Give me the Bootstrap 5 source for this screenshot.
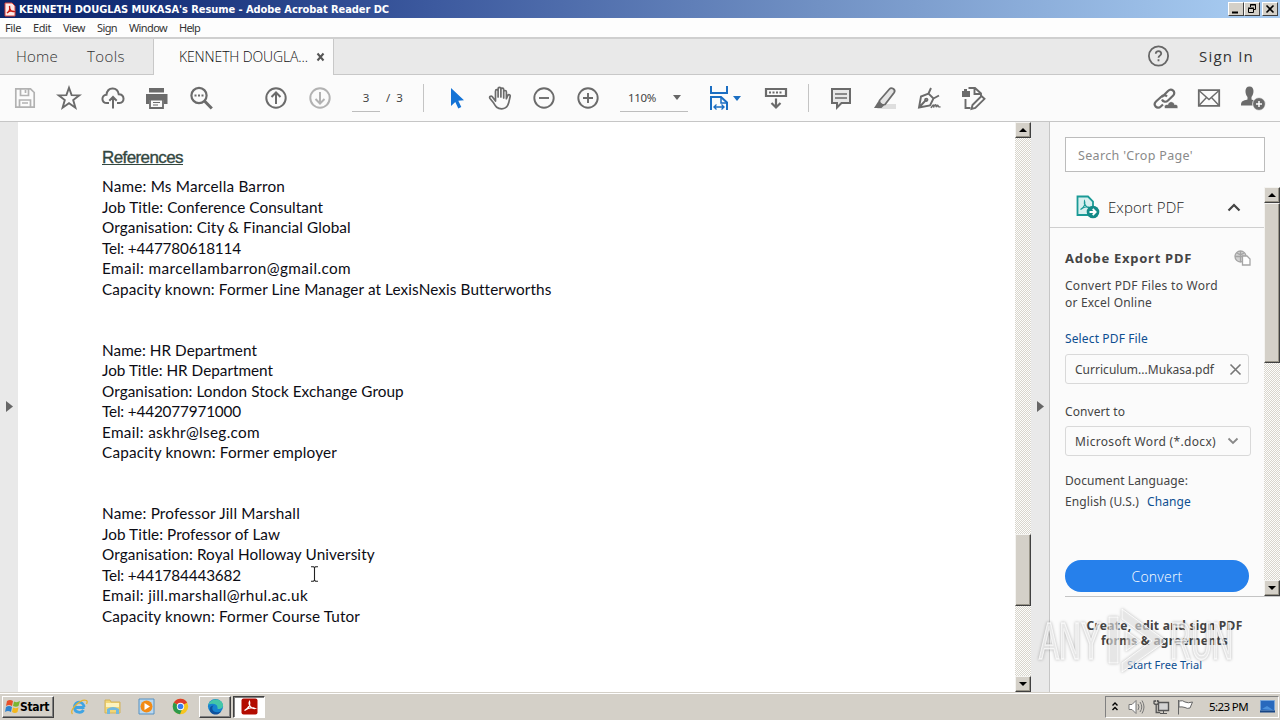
<!DOCTYPE html>
<html lang="en">
<head>
<meta charset="utf-8">
<title>KENNETH DOUGLAS MUKASA's Resume - Adobe Acrobat Reader DC</title>
<link href="https://cdn.jsdelivr.net/npm/bootstrap@5.3.0/dist/css/bootstrap.min.css" rel="stylesheet">
<style>
  body{width:1280px;height:720px;overflow:hidden;background:#fff;font-family:"Noto Sans","Open Sans",sans-serif;font-size:12px;line-height:1.2;color:#444}
  svg{display:block;flex:none}
  [data-w]{display:inline-block;white-space:nowrap}
  .titlebar{height:18px;background:linear-gradient(90deg,#0a246a 0,#16317a 12%,#3d5a9f 34%,#7191c4 64%,#a6caf0 97%);padding:0 2px 0 4px}
  .titlebar .caption{font:bold 11px/18px "DejaVu Sans Condensed","Noto Sans",sans-serif;color:#fff;margin-top:1px}
  .wbtn{width:16px;height:14px;background:#d4d0c8;border:1px solid;border-color:#fff #404040 #404040 #fff}
  .wbtn+.wbtn:last-child{margin-left:2px}
  .menubar{height:19px;font-size:11px;line-height:19px;background:#fdfdfd;color:#333;padding-left:5px;gap:12px}
  .tabstrip{height:38px;border-top:2px solid #cfcfcf;background:#e9e9e9;font-family:"Open Sans",sans-serif}
  .tab-off{border-bottom:1px solid #c8c8c8;color:#333;font-size:15px;font-weight:300;padding-bottom:1px}
  .tab-on{width:181px;background:#fbfbfb;border:solid #c8c8c8;border-width:0 1px;color:#111;font-size:14px;font-weight:300;padding:0 6px 0 25px}
  .toolbar{height:47px;background:#fbfbfb;border-bottom:1px solid #c6c6c6;color:#6b6b6b;font-size:11.5px;padding-left:3px;padding-right:5px}
  .cell{width:44px;display:flex;justify-content:center;flex:none}
  .vr-line{width:1px;height:28px;background:#c4c4c4;flex:none}
  .field{height:28px;border-bottom:1px solid #bdbdbd;color:#444}
  .gutter{background:#e9e9e9;flex:none;width:18px;padding:0 0 2px 6px}
  .paper{width:997px;background:#fff;padding:27px 0 0 84px;font-family:Lato,sans-serif;color:#0c0c14;font-size:15.3px}
  .paper h1{font:17px/17px "Liberation Sans",sans-serif;color:#33473f;margin:0 0 10.2px;-webkit-text-stroke:.35px #33473f}
  .paper .line{height:20.5px;line-height:20.5px}
  .paper .entry{margin-bottom:40.5px}
  .sb{width:16px;flex:none;background:repeating-conic-gradient(#fdfdfb 0 25%,#d8d5cd 0 50%) 0 0/2px 2px}
  .sb .b,.sb .thumb{background:#d4d0c8;border:1px solid;border-color:#f4f3f0 #404040 #404040 #f4f3f0;box-shadow:inset -1px -1px #989488}
  .sb .b{height:16px;display:flex;align-items:center;justify-content:center}
  .side{width:231px;border-left:1px solid #c6c6c6;background:#fbfbfb;flex:none}
  .search{margin:15px 15px 0;height:35px;border:1px solid #bcbcbc;background:#fff;color:#8a8a8a;padding:1px 12px 0;font-size:12.5px}
  .panel{height:409px;margin-top:15px;overflow:hidden}
  .exp-head{height:41px;border-bottom:1px solid #cfcfcf;padding:0 23px 0 26px;font-size:15px;font-weight:300;color:#222;font-family:"Open Sans",sans-serif}
  .exp-body{padding:22px 0 0 15px;width:201px}
  .exp-body>div{height:17px;line-height:17px}
  .exp-body>.box{height:30px;border:1px solid #d9d9d9;border-radius:3px;padding:0 6px 0 9px}
  .blue{color:#0d4f91}
  .exp-body>.convert{height:32px;width:184px;border-radius:16px;background:#2680eb;color:#fff;font-size:14px;font-weight:300;font-family:"Open Sans",sans-serif}
  .trial{margin-left:15px;border-top:1px solid #c4c4c4;padding:21px 16px 0 0;text-align:center;line-height:15px}
  .taskbar{height:28px;background:#d4d0c8;border-top:1px solid #d4d0c8;box-shadow:inset 0 1px #fff;padding:2px 0 2px 2px;color:#000}
  .tbtn{border:1px solid;border-color:#fff #404040 #404040 #fff;box-shadow:inset -1px -1px #808080;height:22px}
  .tbtn.on{background:#fff;border-color:#404040 #fff #fff #404040;box-shadow:inset 1px 1px #808080}
  .tray{width:174px;height:22px;border:1px solid;border-color:#808080 #fff #fff #808080;margin-right:1px;padding:0 3px 0 5px}
  .mark-over{position:absolute;left:1030px;top:600px;pointer-events:none;filter:drop-shadow(0 0 1.5px rgba(0,0,0,.38))}
  .ibeam{position:absolute;left:309px;top:566px}
</style>
</head>
<body class="d-flex flex-column position-relative">
<header class="titlebar d-flex align-items-center flex-shrink-0">
  <svg width="12" height="15" viewBox="0 0 12 15"><path d="M1 1h7l3 3v10H1z" fill="#fce9e7" stroke="#d9423a"/><path d="M3 11c3-2 3-5 2.500-7C5 8 8 10 10 9.500 7 8 5 9 3 11" fill="none" stroke="#c8190f" stroke-width="1.300"/></svg>
  <span class="caption" style="margin-left:3px" data-w="370">KENNETH DOUGLAS MUKASA's Resume - Adobe Acrobat Reader DC</span>
  <div class="d-flex ms-auto">
    <div class="wbtn"><svg width="14" height="12"><path d="M3 9.500h6" stroke="#000" stroke-width="2"/></svg></div>
    <div class="wbtn"><svg width="14" height="12" fill="none" stroke="#000"><path d="M5.500 4V1.500h5v5H9M5 2h6M3.500 5.500h5v4h-5zM3 5h6"/></svg></div>
    <div class="wbtn"><svg width="14" height="12"><path d="M3.500 2.500l7 7m0-7l-7 7" stroke="#000" stroke-width="1.600"/></svg></div>
  </div>
</header>
<nav class="menubar d-flex flex-shrink-0">
  <span data-w="16">File</span><span data-w="18">Edit</span><span data-w="22">View</span><span data-w="20">Sign</span><span data-w="38">Window</span><span data-w="21">Help</span>
</nav>
<div class="tabstrip d-flex flex-shrink-0">
  <div class="tab-off d-flex align-items-center" style="width:153px;padding-left:16px"><span data-w="42">Home</span><span data-w="38" style="margin-left:29px">Tools</span></div>
  <div class="tab-on d-flex align-items-center"><span data-w="129">KENNETH DOUGLA...</span><svg class="ms-auto" width="13" height="10" viewBox="0 0 13 10"><path d="M3.500 1.500l6 7m0-7l-6 7" stroke="#555" stroke-width="2"/></svg></div>
  <div class="tab-off d-flex align-items-center flex-grow-1 justify-content-end" style="padding-right:26px">
    <svg width="22" height="22" viewBox="0 0 22 22" fill="none" stroke="#666" stroke-width="1.800"><circle cx="10.500" cy="11" r="9.600"/><path d="M7.800 8.700c0-3.400 5.400-3.200 5.400 0 0 1.900-2.700 2-2.700 4M10.500 14.300v2"/></svg>
    <span data-w="55" style="margin-left:29px;font-weight:400">Sign In</span>
  </div>
</div>
<div class="toolbar d-flex align-items-center flex-shrink-0">
  <div class="cell"><svg width="24" height="24" viewBox="0 0 24 24" fill="none" stroke="#b2b2b2" stroke-width="1.700"><path d="M2.800 2.800h14.700l3.700 3.700v14.700H2.800zM7.500 3v6.500h8V3M12.500 4v3M6.500 21v-7h11v7M9 17h6"/></svg></div>
  <div class="cell"><svg width="26" height="26" viewBox="0 0 26 26" fill="none" stroke="#6b6b6b" stroke-width="1.900"><path d="M13 2.800l2.600 7.300 7.700.2-6.100 4.700 2.200 7.700L13 18.200l-6.400 4.500L8.800 15l-6.100-4.700 7.700-.2z"/></svg></div>
  <div class="cell"><svg width="24" height="24" viewBox="0 0 24 24" fill="none" stroke="#6b6b6b" stroke-width="2"><path d="M8 17H6c-6 0-6-8-.5-8.300C6.500.500 16.500.500 17.700 8.200 24 8.300 24 17 18.500 17H16M12 22.500V11.500M8.300 14.700L12 11l3.700 3.700"/></svg></div>
  <div class="cell"><svg width="24" height="24" viewBox="1 0 24 24" fill="#6b6b6b"><path d="M5 2h15v4.500H5z"/><path d="M2 8h21.500v10H20v-4H5v4H2z"/><path d="M6 13.500h13V22H6z" fill="#fbfbfb" stroke="#6b6b6b" stroke-width="1.800"/><path d="M9 16.500h7M9 19h5" stroke="#6b6b6b" stroke-width="1.200"/></svg></div>
  <div class="cell"><svg width="24" height="24" viewBox="0 0 24 24" fill="none" stroke="#6b6b6b"><circle cx="10" cy="9.500" r="7.600" stroke-width="2.200"/><path d="M15.500 15l7.300 7.500" stroke-width="3"/><path d="M5.500 9.500h2m1.500 0h2m1.500 0h2" stroke-width="2"/></svg></div>
  <div class="cell" style="margin-left:31px"><svg width="24" height="24" viewBox="0 0 24 24" fill="none" stroke="#6b6b6b" stroke-width="2"><circle cx="12" cy="12" r="9.700"/><path d="M12 18V6.500M7.500 11L12 6.500l4.500 4.500"/></svg></div>
  <div class="cell"><svg width="24" height="24" viewBox="0 0 24 24" fill="none" stroke="#b2b2b2" stroke-width="2"><circle cx="12" cy="12" r="9.700"/><path d="M12 6v11.500M7.500 13l4.500 4.500 4.500-4.500"/></svg></div>
  <div class="field text-center" style="width:28px;margin-left:10px;line-height:28px">3</div>
  <div style="margin-left:6px;width:37px;color:#444"><span data-w="17">/&nbsp; 3</span></div>
  <div class="vr-line"></div>
  <div class="cell" style="margin-left:11px"><svg width="24" height="24" viewBox="0 0 24 24"><path d="M6 2v18l4.300-4 3 6.500 3-1.400-3-6.300 5.700-.5z" fill="#1473d6"/></svg></div>
  <div class="cell" style="margin-left:-1px"><svg width="24" height="24" viewBox="0 0 24 24" fill="none" stroke="#6b6b6b" stroke-width="1.700" stroke-linejoin="round" stroke-linecap="round"><path d="M7.500 15V5.200c0-2 2.600-2 2.600 0V11 2.800c0-2 2.800-2 2.800 0V11 3.600c0-2 2.800-2 2.800 0V12 6c0-2 2.700-2 2.700 0v6.700L19.800 9.500c.8-1.600 2.800-.8 2.300 1C21 16 20.500 22.800 13.700 22.800c-5 0-6.200-2.600-8.200-6L2 12.500c-1.200-1.600.8-3 2.300-1.800z"/></svg></div>
  <div class="cell"><svg width="24" height="24" viewBox="0 0 24 24" fill="none" stroke="#6b6b6b" stroke-width="1.900"><circle cx="12" cy="12" r="9.700"/><path d="M7 12h10"/></svg></div>
  <div class="cell"><svg width="24" height="24" viewBox="0 0 24 24" fill="none" stroke="#6b6b6b" stroke-width="1.900"><circle cx="12" cy="12" r="9.700"/><path d="M7 12h10M12 7v10"/></svg></div>
  <div class="field d-flex align-items-center" style="width:68px;margin-left:10px;padding:0 7px 0 8px"><span data-w="28">110%</span><svg class="ms-auto" width="8" height="5"><path d="M0 0h8L4 5z" fill="#666"/></svg></div>
  <div class="cell" style="margin-left:9px"><svg width="20" height="26" viewBox="0 0 20 26" fill="none" stroke="#1b6ec2" stroke-width="2"><path d="M2 1v7h16V1M2 25V12h10l6 5.500V25"/><path d="M12 12v6h6" stroke-width="1.500"/><path d="M4.500 22h11M7.500 19.500L5 22l2.500 2.500M12.500 19.500L15 22l-2.500 2.500" stroke-width="1.300"/></svg></div>
  <svg width="8" height="5" style="margin-left:-8px"><path d="M0 0h8L4 5z" fill="#1b6ec2"/></svg>
  <div class="cell" style="margin-left:13px"><svg width="24" height="26" viewBox="0 0 24 26" fill="none" stroke="#6b6b6b" stroke-width="2.200"><path d="M2 4h20v7H2zM12 13.500V22M7.500 18l4.500 4.500 4.500-4.500"/><path d="M5 7.500h14" stroke-dasharray="2 1.500" stroke-width="2"/></svg></div>
  <div class="vr-line" style="margin-left:10px"></div>
  <div class="cell" style="margin-left:10px"><svg width="24" height="24" viewBox="0 0 24 24" fill="#e9e9e9" stroke="#6b6b6b" stroke-width="2"><path d="M3 3h18v14h-8.500L8 21.500V17H3z"/><path d="M6 8h12M6 12h12" stroke-width="1.300"/></svg></div>
  <div class="cell"><svg width="24" height="24" viewBox="0 0 24 24"><path d="M8 18h15v5H4z" fill="#dedede"/><path d="M6.500 14.500L16.500 3c2-2.200 6.500.5 4.700 3.500L12 18.500c-3.500 1.200-6-1-5.500-4z" fill="#e4e4e4" stroke="#6b6b6b" stroke-width="1.800"/><path d="M5.500 15l5.500 4.500L8.500 22H1z" fill="#6b6b6b"/></svg></div>
  <div class="cell"><svg width="24" height="24" viewBox="0 0 24 24" fill="none" stroke="#6b6b6b" stroke-width="1.900"><path d="M2 21.500L4 10.500 11.500 7.500l5 5-3.500 7zM11.500 7.500L14 2M16.500 12.500L22 9.500M2 21.500L8.500 14.500"/><circle cx="9.300" cy="13.800" r="1.200"/><path d="M14 22c2-4 3-4 2.500-.5 1.500-4 3-3.500 2.500-.3 1.500-2.400 2-2.400 2.300-.5L23.500 21" stroke-width="1.500"/></svg></div>
  <div class="cell"><svg width="26" height="26" viewBox="0 0 26 26" fill="none" stroke="#6b6b6b" stroke-width="1.900"><path d="M8.500 3H15l6 5.500V11M14.500 3v6H21M5.500 14v9h5"/><path d="M2 6h2V4h3v2h3v6H2z" fill="#6b6b6b" stroke="none"/><path d="M12.500 20L21.500 11l3 2.800-9.200 9.200-3.800 1z"/></svg></div>
  <div class="cell ms-auto"><svg width="26" height="26" viewBox="0 0 26 26" fill="none" stroke="#6b6b6b" stroke-width="2.200"><path d="M10 12l6-6c3.500-3.500 8.500 1 5.200 4.500L16 15.500c-2 2-5 1.500-6-1M15 11.500c-1.500-1.500-4-1.500-5.500 0L4 16.500c-3.500 3.500 1.200 8.500 4.800 5l2.200-2"/><path d="M13 23.500c-2-3 1-4.500 3-4 .5-4 6-3.500 6.500 0 3-.5 4 2 3 4z" fill="#6b6b6b" stroke="#fbfbfb" stroke-width=".6"/></svg></div>
  <div class="cell"><svg width="24" height="24" viewBox="0 0 24 24" fill="none" stroke="#6b6b6b" stroke-width="1.800"><path d="M1.800 4.200h20.400v15.600H1.800z"/><path d="M2 4.500l10 9 10-9M2 19.500l7.500-8M22 19.500l-7.500-8" stroke-width="1.400"/></svg></div>
  <div class="cell"><svg width="26" height="26" viewBox="0 0 26 26" fill="#6b6b6b"><path d="M9.500 1.500c5.500 0 4.500 8 2 10.500v2.500c2 .6 3.500 1 4 1.700-2 1.200-2.800 3-2.500 4.300H1c0-5 2-4.500 6.500-6V12C5 9.500 4 1.500 9.500 1.500z"/><circle cx="19" cy="19" r="6.400" stroke="#fbfbfb" stroke-width=".8"/><path d="M16 19h6M19 16v6" stroke="#fff" stroke-width="1.500"/></svg></div>
</div>
<main class="d-flex flex-grow-1" style="min-height:0">
  <div class="gutter d-flex align-items-center"><svg width="7" height="11"><path d="M0 0v11l7-5.500z" fill="#666"/></svg></div>
  <article class="paper">
    <h1><span data-w="81" class="text-decoration-underline">References</span></h1>
    <div class="entry">
      <div class="line"><span data-w="183">Name: Ms Marcella Barron</span></div>
      <div class="line"><span data-w="221">Job Title: Conference Consultant</span></div>
      <div class="line"><span data-w="249">Organisation: City &amp; Financial Global</span></div>
      <div class="line"><span data-w="139">Tel: +447780618114</span></div>
      <div class="line"><span data-w="249">Email: marcellambarron@gmail.com</span></div>
      <div class="line"><span data-w="449">Capacity known: Former Line Manager at LexisNexis Butterworths</span></div>
    </div>
    <div class="entry">
      <div class="line"><span data-w="155">Name: HR Department</span></div>
      <div class="line"><span data-w="171">Job Title: HR Department</span></div>
      <div class="line"><span data-w="302">Organisation: London Stock Exchange Group</span></div>
      <div class="line"><span data-w="139">Tel: +442077971000</span></div>
      <div class="line"><span data-w="158">Email: askhr@lseg.com</span></div>
      <div class="line"><span data-w="235">Capacity known: Former employer</span></div>
    </div>
    <div class="entry">
      <div class="line"><span data-w="198">Name: Professor Jill Marshall</span></div>
      <div class="line"><span data-w="178">Job Title: Professor of Law</span></div>
      <div class="line"><span data-w="273">Organisation: Royal Holloway University</span></div>
      <div class="line"><span data-w="139">Tel: +441784443682</span></div>
      <div class="line"><span data-w="206">Email: jill.marshall@rhul.ac.uk</span></div>
      <div class="line"><span data-w="258">Capacity known: Former Course Tutor</span></div>
    </div>
  </article>
  <div class="sb d-flex flex-column">
    <div class="b"><svg width="8" height="4"><path d="M0 4h8L4 0z"/></svg></div>
    <div class="thumb" style="margin-top:396px;height:72px"></div>
    <div class="b mt-auto"><svg width="8" height="4"><path d="M0 0h8L4 4z"/></svg></div>
  </div>
  <div class="gutter d-flex align-items-center"><svg width="7" height="11"><path d="M0 0v11l7-5.500z" fill="#666"/></svg></div>
  <aside class="side">
    <div class="search d-flex align-items-center"><span data-w="115">Search 'Crop Page'</span></div>
    <div class="panel d-flex">
      <div class="flex-grow-1">
        <div class="exp-head d-flex align-items-center">
          <svg width="24" height="24" viewBox="0 0 24 24"><path d="M1.500 1.500H12L17 6.500V20H1.500z" fill="#d8f0ef" stroke="#1a9a96" stroke-width="1.800"/><path d="M4.500 14.500c4-2 5-6 4-8.500-1 3.500 2 7 5.500 6.500-3-1.500-6.500-.5-9.500 2z" fill="none" stroke="#1a9a96" stroke-width="1.200"/><circle cx="17" cy="17" r="6.300" fill="#138b88"/><path d="M13.500 17h5.500M16.700 14l3 3-3 3" fill="none" stroke="#fff" stroke-width="1.800"/></svg>
          <span data-w="76" style="margin-left:8px">Export PDF</span>
          <svg class="ms-auto" width="14" height="9" viewBox="0 0 14 9"><path d="M1.500 7.500L7 2l5.500 5.500" fill="none" stroke="#444" stroke-width="2.200"/></svg>
        </div>
        <div class="exp-body">
          <div class="d-flex justify-content-between"><b data-w="127" style="font-size:13px">Adobe Export PDF</b><svg width="17" height="16" viewBox="0 0 17 16" fill="none" stroke="#a5a5a5" stroke-width="1.300"><circle cx="6.500" cy="6.500" r="5.500" fill="#d2d2d2"/><path d="M1 6.500h11M6.500 1v11M3 3c3 2 4 2 7 0"/><path d="M8.500 6H13l3 3v6H8.500z" fill="#fff"/></svg></div>
          <div style="margin-top:10px"><span data-w="153">Convert PDF Files to Word</span></div>
          <div><span data-w="87">or Excel Online</span></div>
          <div class="blue" style="margin-top:19px"><span data-w="83">Select PDF File</span></div>
          <div class="box d-flex align-items-center justify-content-between" style="margin-top:7px;width:184px"><span data-w="139">Curriculum...Mukasa.pdf</span><svg width="13" height="13"><path d="M1.500 1.500l10 10m0-10l-10 10" stroke="#777" stroke-width="1.600"/></svg></div>
          <div style="margin-top:19px"><span data-w="60">Convert to</span></div>
          <div class="box d-flex align-items-center justify-content-between" style="margin-top:6px;width:186px;padding-right:11px"><span data-w="141">Microsoft Word (*.docx)</span><svg width="12" height="8"><path d="M1.500 1.500L6 6l4.500-4.500" fill="none" stroke="#888" stroke-width="1.800"/></svg></div>
          <div style="margin-top:16px"><span data-w="123">Document Language:</span></div>
          <div style="margin-top:4px"><span data-w="74">English (U.S.)</span><span class="blue" data-w="44" style="margin-left:8px">Change</span></div>
          <div class="convert d-flex align-items-center justify-content-center" style="margin-top:50px"><span data-w="51">Convert</span></div>
        </div>
      </div>
      <div class="sb d-flex flex-column">
        <div class="b"><svg width="8" height="4"><path d="M0 4h8L4 0z"/></svg></div>
        <div class="thumb" style="height:160px"></div>
        <div class="b mt-auto"><svg width="8" height="4"><path d="M0 0h8L4 4z"/></svg></div>
      </div>
    </div>
    <div class="trial">
      <div><b data-w="156">Create, edit and sign PDF</b></div>
      <div><b data-w="127">forms &amp; agreements</b></div>
      <div class="blue" style="margin-top:9px;font-size:11px"><span data-w="75">Start Free Trial</span></div>
    </div>
  </aside>
</main>
<footer class="taskbar d-flex align-items-center flex-shrink-0">
  <div class="tbtn d-flex align-items-center" style="width:52px;padding-left:2px"><svg width="15" height="16" viewBox="0 0 15 16"><path d="M2 2q3-2 6 0L7 7Q4 5 1 7z" fill="#e8502a"/><path d="M9 2.500q3 1.500 6-.5L13.500 7Q11 8.500 8 7z" fill="#7ab532"/><path d="M1 8q3-2 6 0L6 13q-3-2-6 0z" fill="#2f83cf"/><path d="M8 8.500Q11 10 13.500 8.300L12.500 13Q10 15 7 13z" fill="#f3b71c"/></svg><b data-w="29" style="margin-top:1px;font-family:'DejaVu Sans Condensed',sans-serif">Start</b></div>
  <svg style="margin-left:16px" width="18" height="18" viewBox="0 0 18 18" fill="none"><path d="M14.500 9.500H4.500c0-7 9-7 9.500-.3M4.500 10c.5 5 7 5.500 9 2" stroke="#3fa4e3" stroke-width="2.800"/><path d="M2.500 16C-1 12 11 0 16.500 2.500c1 .8.500 2.500 0 3.500" stroke="#e5b332" stroke-width="1.300"/></svg>
  <svg style="margin-left:16px" width="18" height="17" viewBox="0 0 18 17"><path d="M1 2h5l1 2h9v11H1z" fill="#f2d675" stroke="#d2b25b"/><path d="M2 5h13v4H2z" fill="#fdf3bd"/><path d="M3 16v-5q6-4 12 0v5h-3v-4H6v4z" fill="#71b9df"/></svg>
  <svg style="margin-left:16px" width="17" height="17" viewBox="0 0 17 17"><path d="M1 1h15v15H1z" fill="#b9d8f0" stroke="#5791c1"/><circle cx="8.500" cy="8.500" r="6" fill="#f28b16"/><path d="M6.500 5v7l5.500-3.500z" fill="#fff"/></svg>
  <svg style="margin-left:17px" width="17" height="17" viewBox="0 0 17 17"><circle cx="8.500" cy="8.500" r="7.700" fill="#f7c51e"/><path d="M8.500 8.500L1.800 4.600A7.700 7.700 0 0 1 15.200 4.600z" fill="#de3c2c"/><path d="M1.800 4.600A7.700 7.700 0 0 0 8 16.200L10.500 10z" fill="#2d9a4b"/><circle cx="8.500" cy="8.500" r="3.700" fill="#fff"/><circle cx="8.500" cy="8.500" r="2.800" fill="#3b7ded"/></svg>
  <div class="tbtn d-flex align-items-center justify-content-center" style="width:32px;margin-left:10px"><svg width="17" height="17" viewBox="0 0 18 18"><circle cx="9" cy="9" r="8" fill="#1683cf"/><path d="M1.500 7C4-1 17 0 17 8c0 4-5 4-6 3 1-5-5-6-9.500-4z" fill="#43c6a8"/><path d="M6 9c-2 5 4 8 9 5-3 6-13 4-12-3 .5-2 2-3 4-3z" fill="#0f519d"/></svg></div>
  <div class="tbtn on d-flex align-items-center justify-content-center" style="width:32px;margin-left:2px"><svg width="17" height="17" viewBox="0 0 17 17"><rect x=".5" y=".5" width="16" height="16" rx="2" fill="#b30b00"/><path d="M3.500 12.500c4-2 6-6 5-9-1.500 3 1.500 7.500 5.500 7-3-1.500-7-.5-10.500 2z" fill="none" stroke="#fff" stroke-width="1.200"/></svg></div>
  <div class="tray d-flex align-items-center ms-auto">
    <svg width="8" height="12" viewBox="0 0 8 12" fill="none" stroke="#000" stroke-width="1.400"><path d="M1.500 4.500L4 2l2.500 2.500M1.500 9L4 6.500 6.500 9"/></svg>
    <svg style="margin-left:9px" width="17" height="16" viewBox="0 0 17 16" fill="none" stroke="#777"><path d="M1 5.500h3L8 1.500v13l-4-4H1z" fill="#fff"/><path d="M10 5q2 3 0 6M12 3q3.500 5 0 10M14 1.500q4 6.500 0 13"/></svg>
    <svg style="margin-left:8px" width="17" height="16" viewBox="0 0 17 16" fill="none" stroke="#555"><path d="M5.500 3.500h10v8h-10z" fill="#d4d4d4" stroke-width="1.400"/><path d="M7 14.500h7M10.500 12v2"/><path d="M1 1.500v3q2 2 4.500 0v-3M3.200 5.500v8h4M2.200 1v2M4.500 1v2" stroke-width="1.300"/></svg>
    <svg style="margin-left:7px" width="17" height="16" viewBox="0 0 17 16" fill="#fff" stroke="#666"><path d="M1.500 1v14.500"/><path d="M2 2q4-1 6 1 3 1.500 7.500 0l-2.500 6q-3 1-5-.5Q5 7.500 2 8z"/></svg>
    <span class="ms-auto" data-w="39" style="font-size:11.5px">5:23 PM</span>
    <svg style="margin-left:12px" width="15" height="13" viewBox="0 0 15 13"><path d="M.5.500h14v10H.5z" fill="#2869bd" stroke="#79a6d9"/><path d="M0 10.500h15v2H0z" fill="#174584"/><path d="M2 9l5-3 6 4z" fill="#4b91dc"/></svg>
  </div>
</footer>
<svg class="ibeam" width="11" height="16" viewBox="0 0 11 16"><path d="M2 .7h2.500l1 1 1-1H9M5.500 1.500v12.500M2 15.200h2.500l1-1 1 1H9" fill="none" stroke="#222" stroke-width="1.100"/></svg>
<svg class="mark-over" width="220" height="84" viewBox="0 0 220 84">
  <g fill="#fff" fill-opacity=".62" font-family="Liberation Sans,sans-serif" font-size="51" stroke="#fff" stroke-opacity=".7" stroke-width="1.500">
    <text x="9" y="59" textLength="62" lengthAdjust="spacingAndGlyphs">ANY</text>
    <text x="140" y="59" textLength="63" lengthAdjust="spacingAndGlyphs">RUN</text>
  </g>
  <path d="M92 9l44 32-44 31v-9l30-22-30-22z M79 17h9v46h-9z M96 31l14 10-14 10z" fill="#fff" fill-opacity=".55" stroke="#fff" stroke-opacity=".8"/>
</svg>
<script src="https://cdn.jsdelivr.net/npm/bootstrap@5.3.0/dist/js/bootstrap.bundle.min.js"></script>
<script>
  // Track each label so that it fills its nominal width
  document.querySelectorAll('[data-w]').forEach(el => {
    const w = el.getBoundingClientRect().width;
    const gap = (el.dataset.w - w) / el.textContent.length;
    el.style.letterSpacing = gap.toFixed(3) + 'px';
  });
</script>
</body>
</html>
